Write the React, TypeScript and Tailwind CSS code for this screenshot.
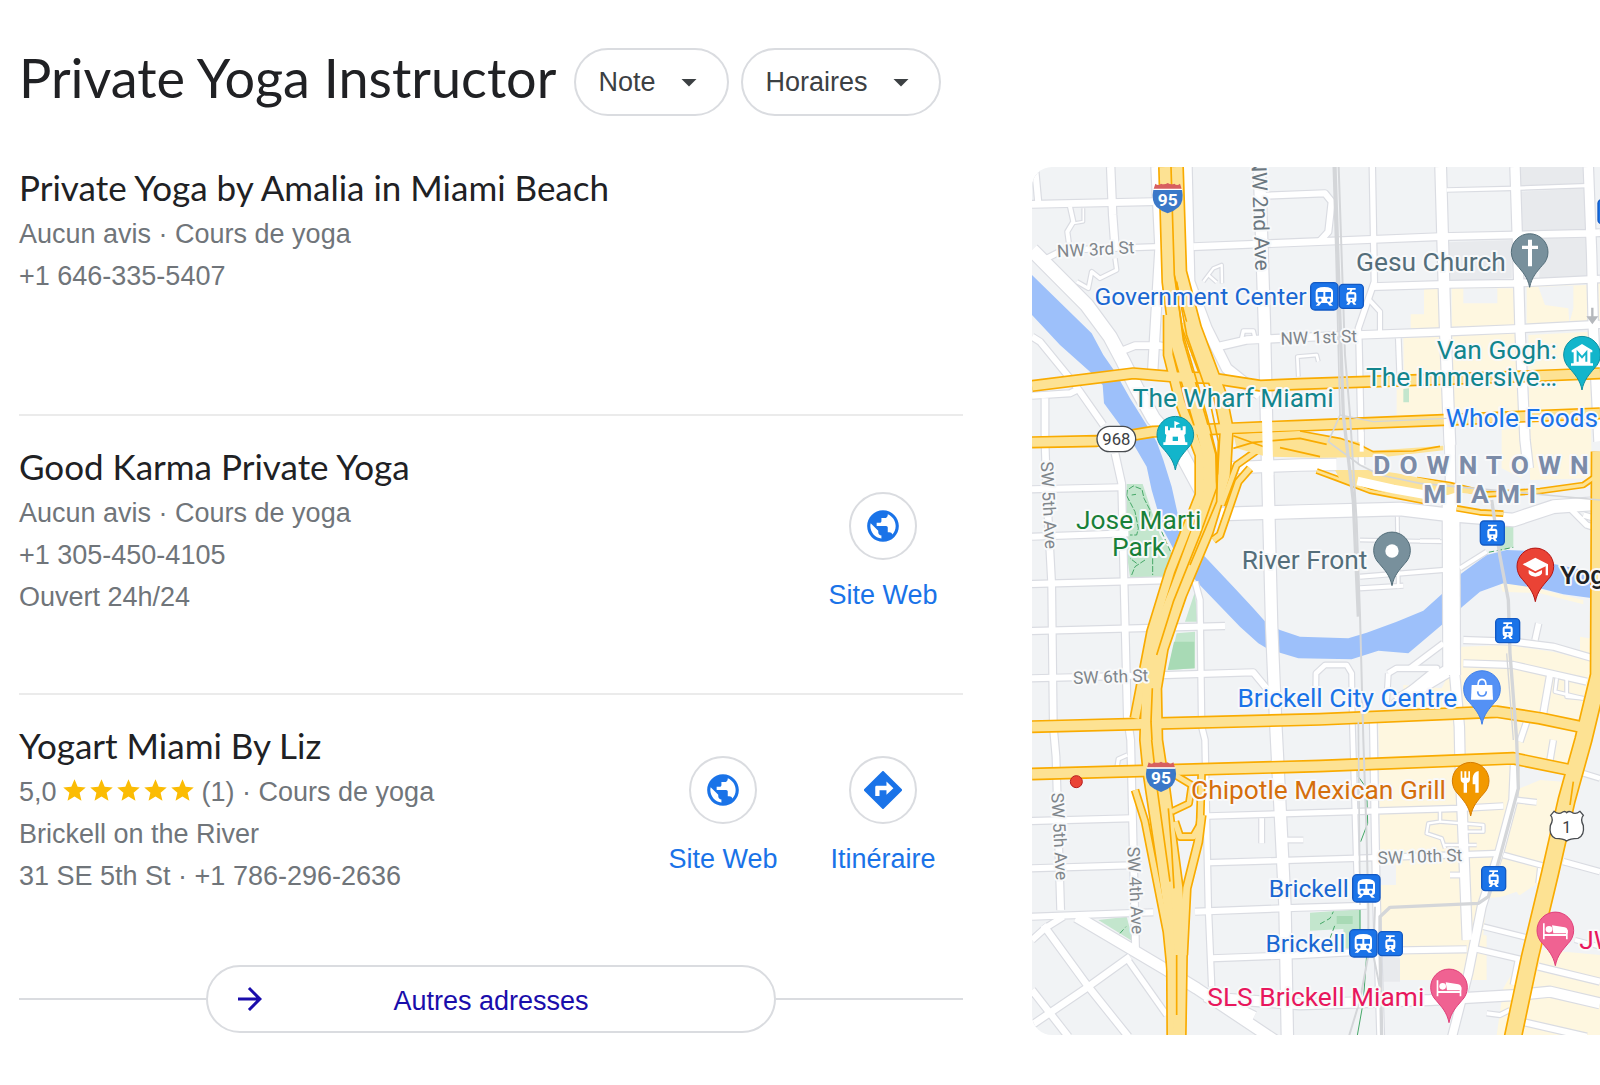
import React from "react";
import { MdArrowDropDown, MdArrowForward, MdPublic, MdStar } from "react-icons/md";

type Pt = string;
type Road = [Pt, number];

/* ---------- Map data (three map units per CSS pixel) ---------- */

const yellowBlocks: string[] = [
  "1212,400 1258,400 1260,518 1172,520 1172,478 1212,478",
  "1295,400 1480,400 1483,512 1295,515",
  "1520,395 1700,390 1702,505 1520,510",
  "1150,548 1265,545 1270,782 1130,782 1130,705 1152,690",
  "1298,540 1490,535 1495,775 1300,778",
  "1525,540 1710,530 1715,970 1530,975",
  "1445,825 1500,815 1505,970 1445,940",
  "1735,385 1740,385 1740,500 1735,500",
  "1325,1475 1460,1470 1600,1490 1720,1520 1700,1700 1640,1935 1590,2155 1560,2190 1500,2225 1490,2210 1400,2240 1400,2475 1140,2475 1140,2400 1085,2400 1075,1700 1150,1700 1150,1590 1265,1600",
  "1440,1285 1500,1288 1690,1335 1690,1348 1560,1315 1448,1310",
  "1680,1445 1740,1455 1720,1520 1680,1500",
  "1520,2380 1740,2400 1740,2641 1430,2641 1450,2500",
];

const darkBlocks: string[] = [
  "1502,36 1690,36 1690,90 1502,95",
  "1502,110 1696,100 1696,230 1507,235",
  "1285,262 1475,255 1475,370 1290,378",
  "1558,250 1700,245 1700,370 1558,372",
  "1085,2400 1140,2410 1140,2480 1090,2480",
];

const grayCuts: string[] = [
  "1330,400 1432,400 1432,445 1330,445",
  "1555,395 1660,392 1660,460 1648,505 1645,460 1575,450",
  "1080,2130 1128,2130 1128,2190 1080,2190",
  "1400,2230 1500,2220 1560,2180 1520,2360 1390,2340",
  "1500,1900 1560,1875 1630,1880 1650,1850 1500,1810",
];

const greens: string[] = [
  "320,987 368,987 392,1060 420,1140 470,1215 450,1265 330,1267 318,1180",
  "495,1400 525,1310 532,1400",
  "470,1435 525,1430 525,1540 445,1545",
  "235,2295 320,2285 340,2360",
  "870,2273 1020,2263 1022,2380 975,2380 970,2322 870,2327",
  "1150,702 1167,700 1167,742 1150,742",
  "1437,1115 1480,1115 1480,1175 1437,1190",
];

const roads: Road[] = [
  ["45,36 55,145", 18],
  ["36,148 400,140", 20],
  ["272,36 278,180 285,275", 22],
  ["70,315 130,285 420,275", 16],
  ["36,285 200,450 270,545 310,620 350,700 400,790 470,870 545,1010", 40],
  ["300,590 345,572 420,572 520,590", 20],
  ["408,36 420,280 408,480 398,650", 28],
  ["500,36 508,380 560,520 620,640 720,720", 30],
  ["718,36 733,500 741,860 755,1415 767,1700 780,1955 795,2255 802,2641", 34],
  ["735,122 915,115 935,140 925,230 900,258", 18],
  ["520,275 840,262 1260,245 1700,235 1740,233", 20],
  ["580,578 680,555 780,550 1010,540 1290,530 1480,522 1740,508", 22],
  ["1055,395 1280,388 1480,385 1740,372", 20],
  ["1057,36 1063,380 1015,520 1017,560 1025,930", 16],
  ["1262,36 1275,500 1285,760 1290,870", 32],
  ["1485,36 1495,340 1500,520 1515,855 1525,940", 28],
  ["1705,36 1715,300 1720,520 1737,860", 28],
  ["1280,105 1480,100 1700,92", 10],
  ["1135,550 1140,680", 14],
  ["1048,435 1080,470 1080,530", 12],
  ["150,155 160,200 142,230 150,290", 12],
  ["160,205 190,200 190,160", 5],
  ["665,550 670,528 700,528 705,550", 10],
  ["550,380 580,340 605,330 606,385", 7],
  ["565,360 590,382", 7],
  ["835,665 832,605 890,600 895,620", 8],
  ["285,310 290,345 240,370 215,350 205,400 170,380", 10],
  ["36,545 60,560 150,670 180,710 250,810", 18],
  ["36,722 150,715 180,700", 18],
  ["75,730 75,860 80,1005 95,1285 100,1715 108,1805 122,2265", 20],
  ["285,895 305,985 312,1275 322,1685 332,1755 338,2005 347,2395", 20],
  ["540,942 840,930 950,928", 34],
  ["600,1077 840,1070 1140,1062 1290,1080 1480,1095 1600,1055 1740,1045", 38],
  ["1640,1050 1700,1110 1730,1120 1725,1090 1690,1080", 16],
  ["36,1003 300,997", 18],
  ["36,1145 325,1135", 18],
  ["36,1287 470,1275", 18],
  ["36,1428 615,1413", 18],
  ["36,1570 440,1560 700,1552 760,1625", 18],
  ["525,1280 540,1335 545,1715 555,1755 565,2255 575,2495", 16],
  ["36,1998 335,1990", 18],
  ["36,2140 365,2130", 18],
  ["36,2285 400,2272", 18],
  ["525,2270 840,2258 1040,2252", 18],
  ["565,1983 1000,1970 1320,1960 1450,1953", 16],
  ["570,2123 1000,2110 1440,2095", 16],
  ["575,2410 840,2400 1080,2387 1340,2383", 18],
  ["600,2530 840,2548 1230,2535 1490,2520 1590,2510 1740,2545", 30],
  ["725,1990 725,2065", 14],
  ["800,2055 850,2055", 14],
  ["290,1845 295,1812 322,1800", 10],
  ["170,2285 440,2445 530,2500 770,2660", 32],
  ["560,2520 700,2590", 40],
  ["36,2355 75,2320 130,2285", 18],
  ["70,2310 205,2495 325,2645", 20],
  ["36,2610 205,2495 330,2405", 20],
  ["36,2505 145,2645", 20],
  ["320,2410 440,2580", 16],
  ["1290,860 1293,1100 1295,1455 1318,1715 1320,1815 1330,2055 1342,2355", 28],
  ["1293,1000 1295,1560", 50],
  ["1330,1455 1480,1460 1600,1475 1720,1510", 18],
  ["1330,1525 1480,1530 1700,1580", 18],
  ["1590,1560 1570,1675", 18],
  ["1640,1570 1640,1625 1690,1630", 8],
  ["1610,1570 1605,1610 1690,1630", 8],
  ["1556,1405 1545,1455", 16],
  ["1105,1555 1130,1540 1250,1540 1120,1645", 16],
  ["1170,1540 1270,1465", 16],
  ["1100,1640 1105,1555", 14],
  ["1130,1640 1280,1550", 36],
  ["887,1660 888,1555 915,1530 980,1530 995,1555 997,1700 1010,2150 1020,2250", 14],
  ["1020,1155 1265,1160", 8],
  ["1020,1265 1270,1245", 12],
  ["1020,1300 1150,1292", 12],
  ["1132,1085 1135,1300", 8],
  ["1260,1158 1200,1158", 10],
  ["1320,1240 1400,1190", 12],
  ["1485,1815 1480,1935 1440,2085 1385,2255 1345,2455 1295,2650", 24],
  ["1060,1700 1065,2005 1070,2250 1082,2645", 20],
  ["1490,1935 1550,1942", 14],
  ["1450,2100 1580,2135", 14],
  ["1560,2140 1555,2185", 12],
  ["1630,2120 1740,2150", 16],
  ["1390,2315 1530,2350", 14],
  ["1360,2380 1510,2415", 16],
  ["1495,2415 1480,2490", 16],
  ["1555,2435 1740,2480", 18],
  ["1505,2600 1700,2645", 18],
  ["1665,2355 1740,2375", 12],
  ["1690,1855 1740,1870", 14],
  ["1600,1755 1590,1815", 16],
  ["1520,1700 1500,1760", 16],
  ["1290,2160 1330,2160", 14],
  ["1260,1965 1260,2000 1225,2005 1220,2035 1265,2050 1275,2080", 7],
  ["1260,2000 1390,2010 1390,2030 1340,2030", 7],
  ["1275,2070 1370,2070", 7],
  ["1400,2575 1440,2580 1470,2565", 12],
];

const highwayAreas: string[] = [
  "640,838 840,828 1020,862 1050,888 1270,872 1270,886 1100,905 900,908 740,905 650,880",
  "945,945 1060,945 1130,955 1280,985 1400,1012 1400,1022 1310,1012 1220,1040 1100,1015 960,975",
];

const highways: Road[] = [
  ["36,693 340,655 460,665 580,670 720,692 840,687 1490,665 1740,655", 27],
  ["36,862 230,858 400,830 640,820 840,812 1270,795 1500,785 1740,775", 27],
  ["890,948 950,970 1050,1008 1215,1040", 8],
  ["1310,1060 1380,1072 1450,1076", 10],
  ["1190,975 1290,990 1400,1018 1560,1008 1690,990 1740,955", 10],
  ["1740,890 1737,1560 1690,1755 1640,1935 1590,2155 1530,2405 1478,2650", 46],
  ["36,1715 900,1693 1430,1670 1560,1690 1680,1715", 29],
  ["36,1857 900,1833 1480,1810 1650,1845", 29],
  ["445,480 445,600 480,740 540,900 540,1020 450,1250 395,1430 345,1690", 24],
  ["437,36 447,380 470,560 540,800 567,900 570,1010 540,1110 470,1300 410,1450 385,1600 380,1755 390,1855 430,2120 460,2330 462,2650", 36],
  ["470,36 480,350 525,520 600,720 620,820 612,960 560,1130 480,1320 425,1480 405,1600 408,1755 430,1900 470,2200 482,2400 478,2650", 34],
  ["500,500 560,660", 34],
  ["690,940 655,980 600,1140 580,1155", 16],
  ["720,880 650,930 605,1050", 14],
  ["345,1905 375,2000 440,2330 452,2450", 16],
  ["465,1860 515,1890 507,1945 455,1970", 14],
  ["465,2000 480,2045 520,2045 540,2010 545,1850", 16],
  ["545,1980 535,2060 500,2200 490,2400", 20],
];

const laneLines: string[] = [
  "453,36 463,360 490,540 560,780 590,900 590,1000 540,1140 460,1340 410,1500",
  "470,380 500,540 570,740 595,860 590,1040 510,1230",
  "395,1755 410,1890 450,2180",
  "397,1600 393,1700 396,1755",
  "445,1960 455,2080 462,2200",
  "470,2400 470,2580",
  "640,842 690,860 740,878",
  "640,880 700,862 840,850 920,868",
  "780,878 900,905",
  "840,828 960,850 1020,870 1060,890 1180,888 1260,874",
  "1660,1880 1650,1950",
];

const rails: Road[] = [
  ["940,36 948,300 960,780 925,860 1020,930 1080,960 1200,985 1740,1035", 5],
  ["956,36 975,600 990,780 1010,1100 1020,1380 1030,1755 1040,2050 1045,2260 1045,2400 1020,2535 985,2650", 6],
  ["945,36 960,500 970,780 1000,1040 1015,1385", 10],
  ["960,780 1060,800 1280,790", 4],
  ["1415,1035 1440,1205 1465,1335 1470,1495 1490,1755 1495,1900 1440,2105 1405,2225 1375,2245 1110,2257 1080,2285 1080,2375 1085,2650", 10],
  ["1460,1495 1480,1755", 4],
  ["1065,2255 1060,2400 1080,2500", 6],
  ["1015,1700 1020,2250", 5],
];

/* ---------- Map parts ---------- */

const Lines = ({ list, color, extra = 0 }: { list: Road[]; color: string; extra?: number }) => (
  <g fill="none" stroke={color} strokeLinejoin="round">
    {list.map(([pts, w], i) => (
      <polyline key={i} points={pts} strokeWidth={w + extra} />
    ))}
  </g>
);

const Shapes = ({ list, color }: { list: string[]; color: string }) => (
  <g fill={color}>
    {list.map((pts, i) => (
      <polygon key={i} points={pts} />
    ))}
  </g>
);

type LabelProps = {
  x: number;
  y: number;
  color: string;
  children: React.ReactNode;
  size?: number;
  end?: boolean;
  rotate?: number;
  weight?: number;
  tracking?: number;
};

const Label = ({ x, y, color, children, size = 79, end, rotate = 0, weight = 400, tracking }: LabelProps) => (
  <text
    transform={`translate(${x} ${y}) rotate(${rotate})`}
    fill={color}
    fontSize={size}
    fontWeight={weight}
    letterSpacing={tracking}
    textAnchor={end ? "end" : "start"}
    stroke="#f8f9fa"
    strokeWidth={12}
    strokeLinejoin="round"
    paintOrder="stroke"
  >
    {children}
  </text>
);

const Pin = ({ x, y, fill, edge, children }: { x: number; y: number; fill: string; edge: string; children: React.ReactNode }) => (
  <g transform={`translate(${x} ${y})`}>
    <path
      d="M0 107C-6 76-22 60-38 41A55 55 0 1 1 38 41C22 60 6 76 0 107Z"
      fill={fill}
      stroke={edge}
      strokeWidth={3}
    />
    {children}
  </g>
);

const Train = ({ x, y }: { x: number; y: number }) => (
  <g transform={`translate(${x} ${y})`}>
    <rect x={-41} y={-41} width={82} height={82} rx={13} fill="#1a73e8" stroke="#1259c3" strokeWidth={4} />
    <path
      d="M-26-14Q-26-28 0-28Q26-28 26-14V12Q26 20 18 20L26 28H16L9 20H-9L-16 28H-26L-18 20Q-26 20-26 12Z"
      fill="#fff"
    />
    <path d="M-20-13H-3V1H-20ZM3-13H20V1H3Z" fill="#1a73e8" />
    <circle cx={-13} cy={11} r={5} fill="#1a73e8" />
    <circle cx={13} cy={11} r={5} fill="#1a73e8" />
  </g>
);

const Tram = ({ x, y }: { x: number; y: number }) => (
  <g transform={`translate(${x} ${y})`}>
    <rect x={-36} y={-36} width={72} height={72} rx={11} fill="#1a73e8" stroke="#1259c3" strokeWidth={4} />
    <path
      d="M-13-25H13V-20H3L0-13H8Q15-13 15-5V10Q15 17 9 17L15 25H7L2 18H-2L-7 25H-15L-9 17Q-15 17-15 10V-5Q-15-13-8-13H-6L-3-20H-13Z"
      fill="#fff"
    />
    <path d="M-9-6H9V4H-9Z" fill="#1a73e8" />
    <circle cy={11} r={3} fill="#1a73e8" />
  </g>
);

const Interstate = ({ x, y }: { x: number; y: number }) => (
  <g transform={`translate(${x} ${y})`}>
    <path d="M-43-26Q-50 8-33 26Q-20 38 0 45Q20 38 33 26Q50 8 43-26Z" fill="#3b78c8" />
    <path d="M-42-28L-37-44Q-28-36-20-44Q-10-40 0-46Q10-40 20-44Q28-36 37-44L42-28Z" fill="#d75f5f" />
    <path d="M-43-27H43" stroke="#fff" strokeWidth={4} />
    <text y={22} textAnchor="middle" fontSize={52} fontWeight={700} fill="#fff">
      95
    </text>
  </g>
);

const Bed = () => (
  <g fill="#fff">
    <path d="M-37-20H-32V12H32V0H37V28H32V18H-32V28H-37Z" />
    <path d="M-10-14L28-8Q37-6 37 4V10H-6Z" />
    <circle cx={-19} cy={-2} r={10} />
  </g>
);

const CityMap = () => (
  <svg
    viewBox="36 36 1704 2604"
    preserveAspectRatio="xMinYMin slice"
    className="block h-[868px] w-full"
    fontFamily="Roboto, sans-serif"
    role="img"
    aria-label="Miami"
  >
    <rect x={36} y={36} width={3000} height={2610} fill="#f1f3f5" />
    <Shapes list={yellowBlocks} color="#fef7e0" />
    <Shapes list={grayCuts} color="#f1f3f5" />
    <Shapes list={darkBlocks} color="#e8eaed" />
    <Shapes list={greens} color="#c3e6cd" />
    <path d="M462 1460H523V1540L443 1545ZM950 2283H998V2307H950Z" fill="#a8dab5" />
    <polygon
      fill="#9dc0fa"
      points="36,360 215,535 250,600 285,650 330,730 380,810 410,860 430,915 455,995 475,1085 490,1135 555,1205 640,1295 700,1360 740,1405 780,1425 840,1445 985,1450 1040,1433 1130,1400 1210,1367 1265,1318 1325,1255 1400,1200 1460,1185 1520,1187 1590,1225 1740,1255 1740,1333 1630,1318 1560,1300 1450,1285 1380,1310 1327,1355 1265,1410 1165,1495 1075,1487 995,1513 835,1510 780,1493 740,1480 715,1465 660,1415 530,1280 470,1200 430,1125 395,1005 380,935 345,875 300,810 252,745 248,690 215,655 120,570 36,480"
    />
    <g fill="none" stroke="#46a868" strokeWidth={3}>
      <path d="M320 1022L322 1005L340 993L366 1003L372 1030L390 1065L388 1090L400 1110M320 1022L345 1070L355 1120L350 1140L330 1140M335 1020L348 1018M335 1260L345 1235L375 1215M350 1225L330 1210M398 1210V1260" strokeDasharray="18 5" />
      <path d="M425 1130L465 1220M1365 1215L1400 1193L1480 1177M300 2335L318 2315M900 2307L930 2290L940 2270M930 2350L945 2310" strokeDasharray="16 8" />
      <path d="M1015 1840V1865L1040 1900L1043 2005L1022 2060M1020 2260V2330M1040 2400L1030 2540L1012 2641" />
    </g>
    <Lines list={roads} color="#dadce2" extra={7} />
    <Lines list={roads} color="#ffffff" />
    <Lines list={highways} color="#f9ab00" extra={10} />
    <Shapes list={highwayAreas} color="#fde293" />
    <Lines list={highways} color="#fde293" />
    <g fill="none" stroke="#f9ab00" strokeWidth={5} strokeLinejoin="round">
      {laneLines.map((pts) => (
        <polyline key={pts} points={pts} />
      ))}
    </g>
    <g fill="none" stroke="#ffffff">
      <path d="M741 790L745 960" strokeWidth={30} />
      <path d="M1025 830V890" strokeWidth={12} />
      <path d="M1284 760L1290 900" strokeWidth={28} />
      <path d="M1012 978L1120 1002L1220 1020L1310 1040" strokeWidth={26} />
    </g>
    <Lines list={rails} color="#d4d6d9" />
    <path d="M1717 458V485M1706 487L1717 502L1728 487Z" stroke="#b5b8bc" strokeWidth={7} fill="#b5b8bc" />

    <Label x={112} y={307} rotate={-3} size={52} color="#80868b">NW 3rd St</Label>
    <Label x={706} y={348} rotate={88} size={63} end color="#6b7780">NW 2nd Ave</Label>
    <Label x={782} y={569} rotate={-2} size={52} color="#80868b">NW 1st St</Label>
    <Label x={62} y={920} rotate={87} size={52} color="#80868b">SW 5th Ave</Label>
    <Label x={160} y={1587} rotate={-2} size={52} color="#80868b">SW 6th St</Label>
    <Label x={94} y={1914} rotate={87} size={52} color="#80868b">SW 5th Ave</Label>
    <Label x={322} y={2076} rotate={87} size={52} color="#80868b">SW 4th Ave</Label>
    <Label x={1073} y={2127} rotate={-2} size={52} color="#80868b">SW 10th St</Label>
    <Label x={860} y={449} size={74} end color="#1967d2">Government Center</Label>
    <Label x={1457} y={347} end color="#546e7a">Gesu Church</Label>
    <Label x={1611} y={613} end color="#12858d">Van Gogh:</Label>
    <Label x={1611} y={693} end color="#12858d">The Immersive…</Label>
    <Label x={338} y={757} color="#12858d">The Wharf Miami</Label>
    <Label x={1277} y={815} color="#1a73e8">Whole Foods</Label>
    <Label x={168} y={1122} color="#188038">Jose Marti</Label>
    <Label x={276} y={1202} color="#188038">Park</Label>
    <Label x={1042} y={1241} end color="#546e7a">River Front</Label>
    <Label x={1060} y={958} weight={700} tracking={27} color="#7b8ba8">DOWNTOWN</Label>
    <Label x={1210} y={1043} weight={700} tracking={25} color="#7b8ba8">MIAMI</Label>
    <Label x={1620} y={1288} weight={500} color="#202124">Yogart</Label>
    <Label x={1312} y={1656} end color="#1a73e8">Brickell City Centre</Label>
    <Label x={1278} y={1932} end color="#d56e0c">Chipotle Mexican Grill</Label>
    <Label x={986} y={2225} size={74} end color="#1967d2">Brickell</Label>
    <Label x={976} y={2390} size={74} end color="#1967d2">Brickell</Label>
    <Label x={1213} y={2552} end color="#e8175d">SLS Brickell Miami</Label>
    <Label x={1678} y={2382} color="#e8175d">JW</Label>

    <Interstate x={443} y={130} />
    <Interstate x={423} y={1866} />
    <rect x={231} y={814} width={116} height={76} rx={38} fill="#fff" stroke="#494c50" strokeWidth={4} />
    <text x={289} y={870} textAnchor="middle" fontSize={50} fill="#3c4043">968</text>
    <path
      d="M1592 1981L1602 1969Q1616 1980 1628 1971Q1636 1967 1640 1973Q1646 1967 1654 1971Q1666 1980 1680 1969L1690 1981Q1680 1992 1690 2012Q1694 2042 1674 2050Q1650 2050 1640 2058Q1630 2050 1606 2050Q1586 2042 1591 2012Q1602 1992 1592 1981Z"
      fill="#fff"
      stroke="#494c50"
      strokeWidth={4}
    />
    <text x={1640} y={2035} textAnchor="middle" fontSize={48} fill="#3c4043">1</text>
    <circle cx={169} cy={1880} r={18} fill="#ea4335" stroke="#b71c1c" strokeWidth={3} />

    <Train x={913} y={424} />
    <Tram x={994} y={424} />
    <Tram x={1417} y={1134} />
    <Tram x={1463} y={1427} />
    <Tram x={1421} y={2171} />
    <Train x={1039} y={2200} />
    <Train x={1030} y={2365} />
    <Tram x={1111} y={2366} />
    <Tram x={1770} y={170} />

    <Pin x={466} y={838} fill="#12b5cb" edge="#0e8fa0">
      <path d="M-3-40L14-33L2-27V-20H16V-12H22V-24H31V-2L27 2L30 24H36V32H-36V24H-30L-27 2L-31-2V-24H-22V-12H-16V-20H-3Z" fill="#fff" />
      <path d="M-8 7H8V20H-8Z" fill="#12b5cb" />
    </Pin>
    <Pin x={1529} y={290} fill="#78909c" edge="#546e7a">
      <path d="M-5-36H7V-18H25V-8H7V44H-5V-8H-23V-18H-5Z" fill="#fff" />
    </Pin>
    <Pin x={1686} y={598} fill="#12b5cb" edge="#0e8fa0">
      <path d="M0-31L31-12V-6H25V27H33V34H-33V27H-25V-6H-31V-12Z" fill="#fff" />
      <path d="M-13 22V-6L0 9L13-6V22" fill="none" stroke="#12b5cb" strokeWidth={6} />
    </Pin>
    <Pin x={1116} y={1185} fill="#78909c" edge="#546e7a">
      <circle r={20} cy={3} fill="#fff" />
    </Pin>
    <Pin x={1546} y={1233} fill="#ea4335" edge="#b31412">
      <path d="M0-25L38-5V28H31V1L0 16L-38-5ZM-20 12L0 22L20 12V22Q14 32 0 32Q-14 32-20 22Z" fill="#fff" />
    </Pin>
    <Pin x={1386} y={1601} fill="#5491f5" edge="#3f7fe8">
      <path d="M-31-11H31L33 33H-33Z" fill="#fff" />
      <path d="M-12-10Q-12-28 0-28Q12-28 12-10" fill="none" stroke="#fff" strokeWidth={5} />
      <path d="M-13 8Q-12 22 0 22Q12 22 13 8" fill="none" stroke="#5491f5" strokeWidth={5} />
    </Pin>
    <Pin x={1352} y={1876} fill="#f29900" edge="#d67c00">
      <path d="M-30-27H-25V-8H-19V-27H-13V-8H-7V-27H-2V-4Q-2 6-11 8V37H-21V8Q-30 6-30-4ZM24-28V37H14V12H6V-8Q8-25 24-28Z" fill="#fff" />
    </Pin>
    <Pin x={1606} y={2325} fill="#f06292" edge="#e0407a">
      <Bed />
    </Pin>
    <Pin x={1287} y={2496} fill="#f06292" edge="#e0407a">
      <Bed />
    </Pin>
  </svg>
);

/* ---------- Results list ---------- */

const FilterChip = ({ label }: { label: string }) => (
  <button
    type="button"
    aria-haspopup="listbox"
    className="flex h-[68px] items-center gap-4 rounded-full border-2 border-[#dadce0] pr-5 pl-[22px] text-[27px] text-[#3c4043]"
  >
    {label}
    <MdArrowDropDown className="size-9" />
  </button>
);

const Action = ({ label, icon }: { label: string; icon: React.ReactNode }) => (
  <a href="#" className="flex w-40 flex-col items-center gap-[15px] leading-10 text-[#1a73e8]">
    <span className="flex size-[68px] items-center justify-center rounded-full border-2 border-[#dadce0]">{icon}</span>
    {label}
  </a>
);

const WebAction = () => <Action label="Site Web" icon={<MdPublic className="size-[38px]" />} />;

const DirectionsIcon = () => (
  <svg viewBox="0 0 115 115" className="size-[38px]" aria-hidden="true">
    <path d="M57.500 4L111 57.500L57.500 111L4 57.500Z" fill="currentColor" stroke="currentColor" strokeWidth={8} strokeLinejoin="round" />
    <path d="M34 76V49Q34 45 38 45H68V32L89 52L68 72V58H47V76Z" fill="#fff" />
  </svg>
);

const Heading = ({ children }: { children: React.ReactNode }) => (
  <h2 className="mb-1.5 font-[Lato,sans-serif] text-[35px] leading-10 text-[#202124]">{children}</h2>
);

export default function App() {
  return (
    <main className="min-h-screen bg-white pt-12 pb-12 pl-[19px] font-['Liberation_Sans',Arial,sans-serif] text-[27px] leading-[42px] text-[#70757a]">
      <header className="flex items-center gap-3">
        <h1 className="mr-1.5 pb-2 font-[Lato,sans-serif] text-[54px] leading-[60px] text-[#202124]">Private Yoga Instructor</h1>
        <FilterChip label="Note" />
        <FilterChip label="Horaires" />
      </header>

      <div className="mt-[51px] flex gap-[69px]">
        <section className="w-[944px] shrink-0">
          <article className="min-h-[247px]">
            <Heading>Private Yoga by Amalia in Miami Beach</Heading>
            <p>Aucun avis · Cours de yoga</p>
            <p>+1 646-335-5407</p>
          </article>

          <article className="flex min-h-[279px] justify-between border-t-2 border-[#ebebeb]">
            <div className="pt-[30px]">
              <Heading>Good Karma Private Yoga</Heading>
              <p>Aucun avis · Cours de yoga</p>
              <p>+1 305-450-4105</p>
              <p>Ouvert 24h/24</p>
            </div>
            <div className="flex pt-[76px]">
              <WebAction />
            </div>
          </article>

          <article className="flex min-h-[272px] justify-between border-t-2 border-[#ebebeb]">
            <div className="pt-[30px]">
              <Heading>Yogart Miami By Liz</Heading>
              <p className="flex items-center">
                5,0
                <span className="mr-1.5 ml-1 flex pb-1" role="img" aria-label="5 sur 5">
                  {[0, 1, 2, 3, 4].map((i) => (
                    <MdStar key={i} className="size-[27px] text-[#fbbc04]" />
                  ))}
                </span>
                (1) · Cours de yoga
              </p>
              <p>Brickell on the River</p>
              <p>31 SE 5th St · +1 786-296-2636</p>
            </div>
            <div className="flex pt-[61px]">
              <WebAction />
              <Action label="Itinéraire" icon={<DirectionsIcon />} />
            </div>
          </article>

          <div className="flex items-center">
            <span className="h-0.5 flex-1 bg-[#dadce0]" />
            <a
              href="#"
              className="relative flex h-[68px] w-[570px] items-center justify-center rounded-full border-2 border-[#dadce0] pt-1 text-[#1a0dab]"
            >
              <span className="absolute inset-y-0 left-6 flex items-center">
                <MdArrowForward className="size-9" />
              </span>
              Autres adresses
            </a>
            <span className="h-0.5 flex-1 bg-[#dadce0]" />
          </div>
        </section>

        <section className="min-w-0 flex-1 overflow-hidden rounded-l-[20px]">
          <CityMap />
        </section>
      </div>
    </main>
  );
}
